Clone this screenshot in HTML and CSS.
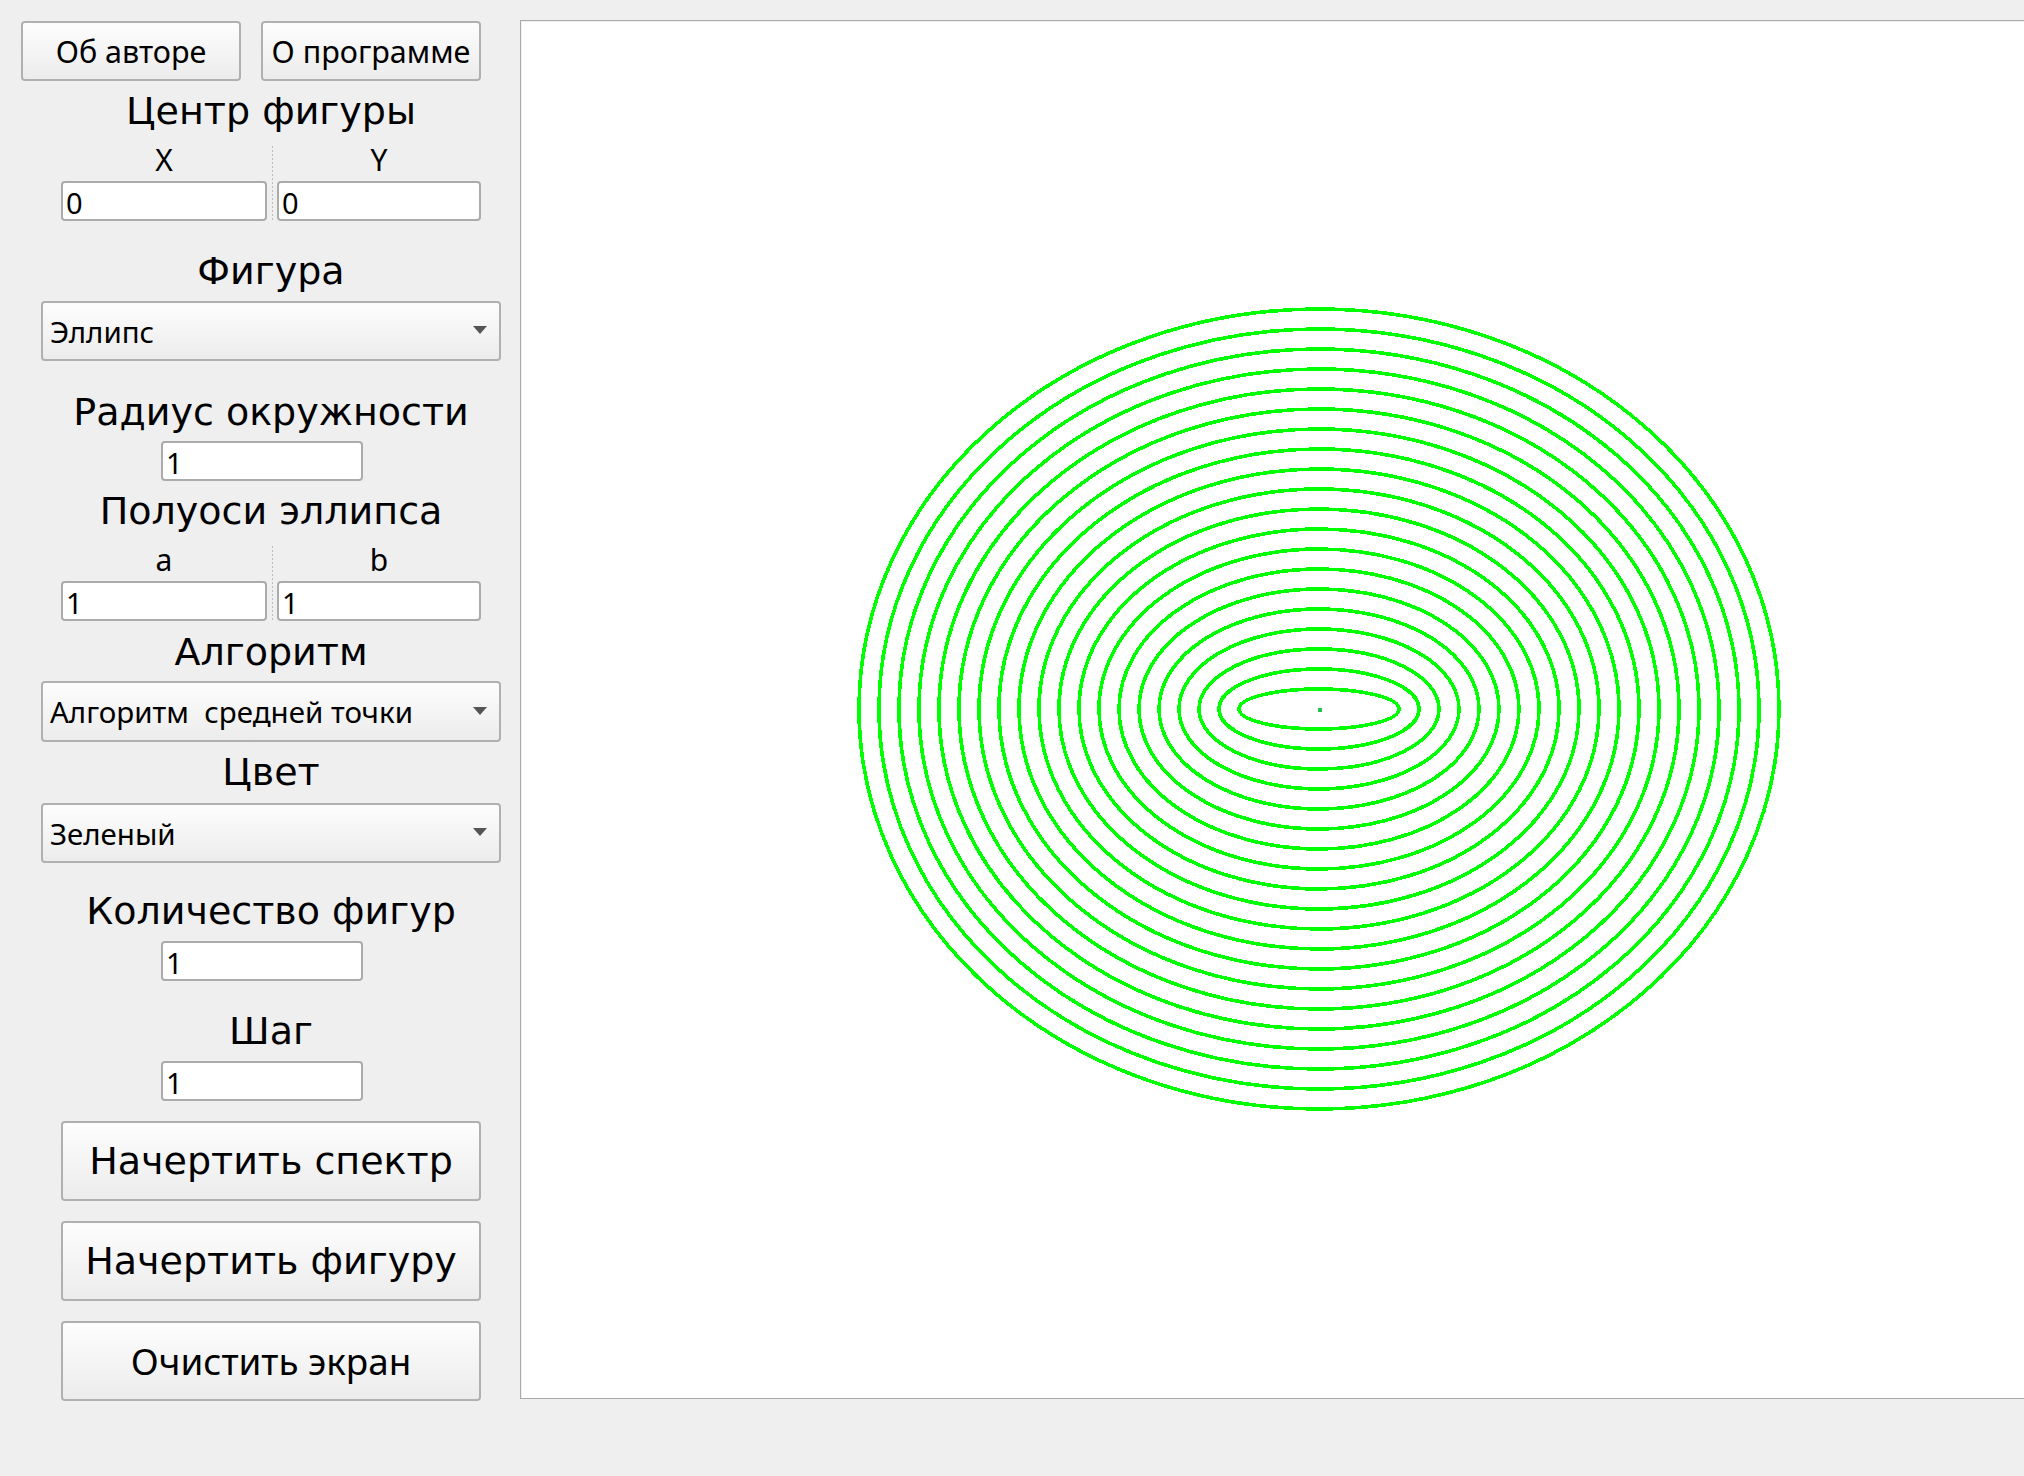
FILE: index.html
```html
<!DOCTYPE html>
<html lang="ru">
<head>
<meta charset="utf-8">
<title>Построение эллипсов</title>
<link rel="stylesheet" href="styles.css">
</head>
<body>
<div class="window">
  <aside class="panel">
    <div class="top-buttons">
      <button class="btn btn-top">Об авторе</button>
      <button class="btn btn-top">О программе</button>
    </div>

    <div class="heading mt-9">Центр фигуры</div>
    <div class="pair mt-14">
      <div class="pair-label">X</div>
      <div class="pair-sep"></div>
      <div class="pair-label">Y</div>
      <input class="field" value="0">
      <input class="field" value="0">
    </div>

    <div class="heading mt-29">Фигура</div>
    <div class="combo mt-9"><span class="combo-text">Эллипс</span><span class="combo-arrow"></span></div>

    <div class="heading mt-30">Радиус окружности</div>
    <input class="field field-narrow mt-8" value="1">

    <div class="heading mt-9">Полуоси эллипса</div>
    <div class="pair mt-14">
      <div class="pair-label">a</div>
      <div class="pair-sep"></div>
      <div class="pair-label">b</div>
      <input class="field" value="1">
      <input class="field" value="1">
    </div>

    <div class="heading mt-10">Алгоритм</div>
    <div class="combo combo-tall mt-8"><span class="combo-text">Алгоритм&nbsp; средней точки</span><span class="combo-arrow"></span></div>

    <div class="heading mt-9">Цвет</div>
    <div class="combo mt-10"><span class="combo-text">Зеленый</span><span class="combo-arrow"></span></div>

    <div class="heading mt-27">Количество фигур</div>
    <input class="field field-narrow mt-9" value="1">

    <div class="heading mt-29">Шаг</div>
    <input class="field field-narrow mt-9" value="1">

    <button class="btn btn-big mt-20">Начертить спектр</button>
    <button class="btn btn-big mt-20">Начертить фигуру</button>
    <button class="btn btn-big btn-alt mt-20">Очистить экран</button>
  </aside>

  <main class="canvas">
    <svg class="canvas-svg" width="1596" height="1377" viewBox="0 0 1596 1377" shape-rendering="crispEdges">
      <g fill="none" stroke="#00ff00" stroke-width="3.6">
        <ellipse cx="798" cy="688" rx="80" ry="20"/>
        <ellipse cx="798" cy="688" rx="100" ry="40"/>
        <ellipse cx="798" cy="688" rx="120" ry="60"/>
        <ellipse cx="798" cy="688" rx="140" ry="80"/>
        <ellipse cx="798" cy="688" rx="160" ry="100"/>
        <ellipse cx="798" cy="688" rx="180" ry="120"/>
        <ellipse cx="798" cy="688" rx="200" ry="140"/>
        <ellipse cx="798" cy="688" rx="220" ry="160"/>
        <ellipse cx="798" cy="688" rx="240" ry="180"/>
        <ellipse cx="798" cy="688" rx="260" ry="200"/>
        <ellipse cx="798" cy="688" rx="280" ry="220"/>
        <ellipse cx="798" cy="688" rx="300" ry="240"/>
        <ellipse cx="798" cy="688" rx="320" ry="260"/>
        <ellipse cx="798" cy="688" rx="340" ry="280"/>
        <ellipse cx="798" cy="688" rx="360" ry="300"/>
        <ellipse cx="798" cy="688" rx="380" ry="320"/>
        <ellipse cx="798" cy="688" rx="400" ry="340"/>
        <ellipse cx="798" cy="688" rx="420" ry="360"/>
        <ellipse cx="798" cy="688" rx="440" ry="380"/>
        <ellipse cx="798" cy="688" rx="460" ry="400"/>
      </g>
      <rect x="797" y="687" width="4" height="4" fill="#22c455"/>
    </svg>
  </main>
</div>
</body>
</html>
```

FILE: styles.css
```css
html, body {
  margin: 0;
  padding: 0;
  overflow: hidden;
  background: #efefef;
}

body {
  width: 2024px;
  height: 1476px;
  font-family: "Noto Sans", "Open Sans", sans-serif;
  color: #000;
}

.window {
  display: flex;
  align-items: flex-start;
  width: 2200px;
}

.panel {
  flex: 0 0 520px;
  box-sizing: border-box;
  padding: 21px 0 0 21px;
  display: flex;
  flex-direction: column;
  align-items: flex-start;
}

.top-buttons {
  display: flex;
  gap: 20px;
}

.btn {
  box-sizing: border-box;
  margin: 0;
  padding: 0;
  border: 2px solid #b0b0b0;
  border-radius: 4px;
  background: linear-gradient(#fdfdfd, #ececec);
  color: #000;
  text-align: center;
  white-space: nowrap;
  cursor: default;
}

.btn-top {
  width: 220px;
  height: 60px;
  font-family: "Noto Sans", "Open Sans", sans-serif;
  font-size: 30.5px;
}

.btn-big {
  width: 420px;
  height: 80px;
  margin-left: 40px;
  font-family: "DejaVu Sans", sans-serif;
  font-size: 38px;
}

.btn-alt {
  font-family: "Noto Sans", "Open Sans", sans-serif;
  font-size: 36.8px;
}

.heading {
  width: 460px;
  margin-left: 20px;
  height: 42px;
  line-height: 42px;
  text-align: center;
  font-family: "DejaVu Sans", sans-serif;
  font-size: 38px;
  white-space: nowrap;
}

.pair {
  margin-left: 40px;
  display: grid;
  grid-template-columns: 206px 10px 204px;
  grid-template-rows: 35px 40px;
}

.pair-label {
  text-align: center;
  font-size: 30px;
  line-height: 27px;
}

.pair-sep {
  grid-row: 1 / 3;
  grid-column: 2;
  justify-self: center;
  width: 1px;
  height: 74px;
  background: repeating-linear-gradient(to bottom, #bdbdbd 0 2px, transparent 2px 4px);
}

.field {
  box-sizing: border-box;
  width: 100%;
  height: 40px;
  margin: 0;
  padding: 3px 0 0 3px;
  border: 2px solid #ababab;
  border-radius: 4px;
  background: #fff;
  font-family: "Noto Sans", "Open Sans", sans-serif;
  font-size: 29px;
  color: #000;
  outline: none;
}

.pair .field:nth-of-type(1) { grid-column: 1; grid-row: 2; }
.pair .field:nth-of-type(2) { grid-column: 3; grid-row: 2; }

.field-narrow {
  width: 202px;
  margin-left: 140px;
}

.combo {
  box-sizing: border-box;
  width: 460px;
  height: 60px;
  margin-left: 20px;
  display: flex;
  align-items: center;
  justify-content: space-between;
  padding: 0 12px 0 7px;
  border: 2px solid #b0b0b0;
  border-radius: 4px;
  background: linear-gradient(#fdfdfd, #ececec);
  font-size: 29.5px;
  white-space: nowrap;
}

.combo-tall { height: 61px; }

.combo-arrow {
  width: 0;
  height: 0;
  border-left: 7.5px solid transparent;
  border-right: 7.5px solid transparent;
  border-top: 8px solid #555;
  margin-top: -2px;
}

.canvas {
  flex: 0 0 auto;
  box-sizing: border-box;
  width: 1598px;
  height: 1379px;
  margin-top: 20px;
  border: 1px solid #a9a9a9;
  background: #fff;
  box-shadow: inset 1px 1px 0 #f2f2f2;
}

.canvas-svg { display: block; }

.mt-8 { margin-top: 8px; }
.mt-9 { margin-top: 9px; }
.mt-10 { margin-top: 10px; }
.mt-14 { margin-top: 14px; }
.mt-20 { margin-top: 20px; }
.mt-27 { margin-top: 27px; }
.mt-29 { margin-top: 29px; }
.mt-30 { margin-top: 30px; }
```
